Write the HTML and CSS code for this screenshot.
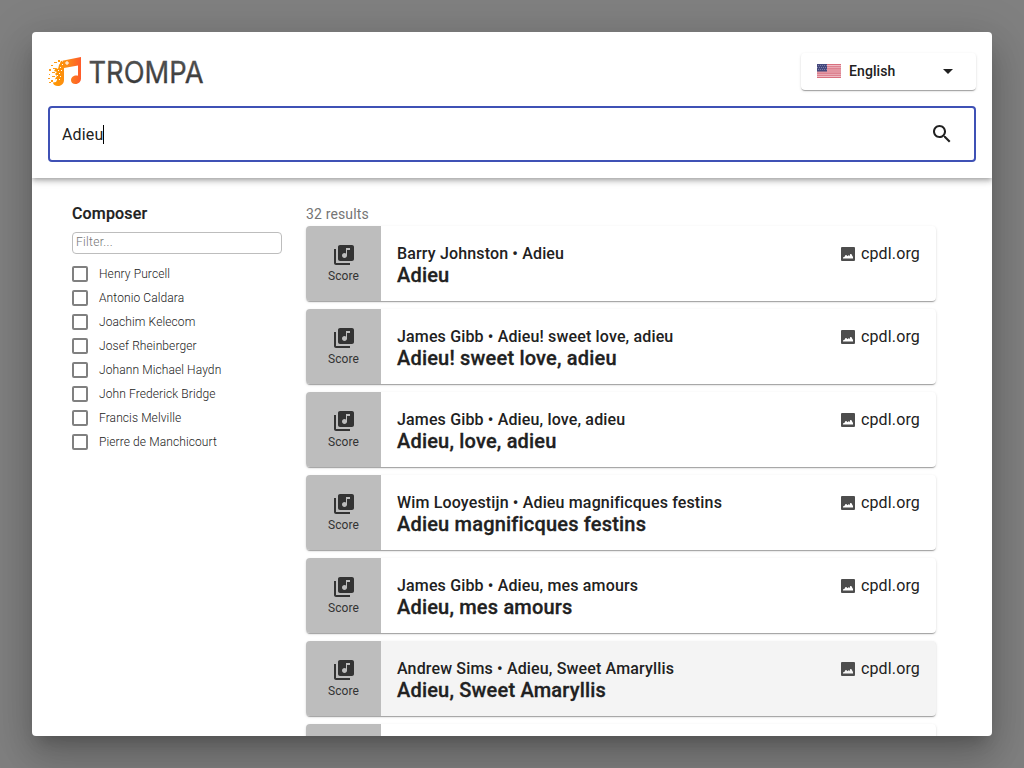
FILE: index.html
```html
<!DOCTYPE html>
<html lang="en">
<head>
<meta charset="utf-8">
<title>Trompa search</title>
<link rel="stylesheet" href="styles.css">
</head>
<body>
<svg width="0" height="0" class="defs">
  <symbol id="score" viewBox="0 0 24 24"><path d="M20 2H8c-1.100 0-2 .9-2 2v12c0 1.100.9 2 2 2h12c1.100 0 2-.9 2-2V4c0-1.100-.9-2-2-2zm-2 5h-3v5.500c0 1.380-1.120 2.500-2.500 2.500S10 13.880 10 12.500s1.120-2.500 2.500-2.500c.57 0 1.080.19 1.500.51V5h4v2zM4 6H2v14c0 1.100.9 2 2 2h14v-2H4V6z"/></symbol>
  <symbol id="picture" viewBox="0 0 14 14"><path fill-rule="evenodd" d="M1 0h12q1 0 1 1v12q0 1-1 1H1q-1 0-1-1V1q0-1 1-1zM2 11.500h10V10L10.300 7h-1L8.300 9.200 7.500 8 6.700 9.200 5.200 8h-.7L3.800 9.600 2 10.500z"/></symbol>
</svg>
<main class="dialog">
  <header class="header">
    <div class="topbar">
      <div class="brand">
        <svg class="note" width="34" height="30" viewBox="0 0 34 30">
          <defs><linearGradient id="flame"><stop offset="0" stop-color="#ff9800"/><stop offset=".5" stop-color="#fb8c17"/><stop offset="1" stop-color="#ff5a2b"/></linearGradient></defs>
          <path fill="url(#flame)" d="M13 5 33 1v21.500c0 3-2.400 5.500-5.500 5.500-2.800 0-4.500-1.600-4.500-3.800 0-2.700 2.500-4.700 5.300-4.700.6 0 1.200.1 1.700.3V9.500L16 12v12c0 3.500-2.500 6-6 6-3 0-5-1.400-5-3.500l3-.5 1-2-2-1 2-3-2-2 2-2-3-1 2-3 2 1 1-4z"/>
          <g fill="#ff9d1a"><path d="M3 9h2v1H3zM6 6h3v1H6zM1 13h2v2H1zM4 16h3v1H4zM1 18h1v1H1zM4 20h3v1H4zM0 22h2v1H0zM1 26h2v1H1zM3 24h2v2H3zM5 12h3v1H5zM10 4h2v2h-2z"/></g>
          <g fill="#fff"><path d="M11 7h1v1h-1zM14 8h1v1h-1zM12 11h1v1h-1zM9 11h1v1H9zM10 14h1v1h-1zM13 14h1v1h-1zM11 17h1v1h-1zM9 19h1v1H9zM12 20h1v1h-1zM8 23h1v1H8zM11 23h1v1h-1z"/></g>
          <path fill="none" stroke="#fff" stroke-width="1" d="M18 6h2v2h-2zM14 5h1"/>
        </svg>
        <svg class="wordmark" width="122" height="36" viewBox="0 0 122 36">
          <defs><linearGradient id="ink" x2="0" y2="1"><stop offset="0" stop-color="#575757"/><stop offset="1" stop-color="#333"/></linearGradient></defs>
          <text x="-.5" y="27" textLength="115" lengthAdjust="spacingAndGlyphs">TROMPA</text>
        </svg>
      </div>
      <div class="language">
        <svg width="24" height="14" viewBox="0 0 24 14"><path fill="#eebbc4" d="M0 0h24v14H0z"/><path stroke="#d8707f" stroke-width="1.080" d="M0 .54h24M0 2.690h24M0 4.850h24M0 7h24M0 9.150h24M0 11.310h24M0 13.460h24"/><path fill="#44487d" d="M0 0h10v7.500H0z"/><path stroke="#8c8eb2" stroke-width=".8" stroke-dasharray="1 1" d="M1 1.500h9M0 3.500h9M1 5.500h9"/></svg>
        <span>English</span>
        <svg class="caret" width="24" height="24" viewBox="0 0 24 24"><path d="m7 10 5 5 5-5z"/></svg>
      </div>
    </div>
    <div class="search">
      <span class="query">Adieu</span>
      <svg width="24" height="24" viewBox="0 0 24 24"><path d="M15.500 14h-.79l-.28-.27C15.410 12.590 16 11.110 16 9.500 16 5.910 13.090 3 9.500 3S3 5.910 3 9.500 5.910 16 9.500 16c1.610 0 3.090-.59 4.230-1.570l.27.28v.79l5 4.990L20.490 19l-4.990-5zm-6 0C7.010 14 5 11.990 5 9.500S7.010 5 9.500 5 14 7.010 14 9.500 11.990 14 9.500 14z"/></svg>
    </div>
  </header>
  <div class="content">
    <aside class="facets">
      <h2>Composer</h2>
      <input class="filter" placeholder="Filter...">
      <ul>
        <li><i class="box"></i>Henry Purcell</li>
        <li><i class="box"></i>Antonio Caldara</li>
        <li><i class="box"></i>Joachim Kelecom</li>
        <li><i class="box"></i>Josef Rheinberger</li>
        <li><i class="box"></i>Johann Michael Haydn</li>
        <li><i class="box"></i>John Frederick Bridge</li>
        <li><i class="box"></i>Francis Melville</li>
        <li><i class="box"></i>Pierre de Manchicourt</li>
      </ul>
    </aside>
    <section class="results">
      <p class="count">32 results</p>
      <article class="card"><div class="kind"><svg width="24" height="24"><use href="#score"/></svg>Score</div><div class="info"><p>Barry Johnston • Adieu</p><h3>Adieu</h3></div><div class="source"><svg width="14" height="14"><use href="#picture"/></svg>cpdl.org</div></article>
      <article class="card"><div class="kind"><svg width="24" height="24"><use href="#score"/></svg>Score</div><div class="info"><p>James Gibb • Adieu! sweet love, adieu</p><h3>Adieu! sweet love, adieu</h3></div><div class="source"><svg width="14" height="14"><use href="#picture"/></svg>cpdl.org</div></article>
      <article class="card"><div class="kind"><svg width="24" height="24"><use href="#score"/></svg>Score</div><div class="info"><p>James Gibb • Adieu, love, adieu</p><h3>Adieu, love, adieu</h3></div><div class="source"><svg width="14" height="14"><use href="#picture"/></svg>cpdl.org</div></article>
      <article class="card"><div class="kind"><svg width="24" height="24"><use href="#score"/></svg>Score</div><div class="info"><p>Wim Looyestijn • Adieu magnificques festins</p><h3>Adieu magnificques festins</h3></div><div class="source"><svg width="14" height="14"><use href="#picture"/></svg>cpdl.org</div></article>
      <article class="card"><div class="kind"><svg width="24" height="24"><use href="#score"/></svg>Score</div><div class="info"><p>James Gibb • Adieu, mes amours</p><h3>Adieu, mes amours</h3></div><div class="source"><svg width="14" height="14"><use href="#picture"/></svg>cpdl.org</div></article>
      <article class="card hovered"><div class="kind"><svg width="24" height="24"><use href="#score"/></svg>Score</div><div class="info"><p>Andrew Sims • Adieu, Sweet Amaryllis</p><h3>Adieu, Sweet Amaryllis</h3></div><div class="source"><svg width="14" height="14"><use href="#picture"/></svg>cpdl.org</div></article>
      <article class="card"><div class="kind"></div></article>
    </section>
  </div>
</main>
</body>
</html>
```
FILE: styles.css
```css
* { box-sizing: border-box; }
body {
  margin: 0;
  height: 100vh;
  padding: 32px;
  overflow: hidden;
  background: #808080;
  color: #212121;
  font-family: Roboto, sans-serif;
}
h2, h3, p, ul { margin: 0; padding: 0; }
svg { display: block; flex: none; fill: currentColor; }
.defs { display: none; }
.dialog {
  height: 704px;
  display: flex;
  flex-direction: column;
  overflow: hidden;
  border-radius: 4px;
  background: #fff;
  box-shadow: 0 11px 15px -7px rgba(0,0,0,.2), 0 24px 38px 3px rgba(0,0,0,.14), 0 9px 46px 8px rgba(0,0,0,.12);
}
.header {
  flex: none;
  height: 146px;
  padding: 21px 16px 0;
  box-shadow: 0 2px 4px -1px rgba(0,0,0,.2), 0 4px 5px rgba(0,0,0,.14), 0 1px 10px rgba(0,0,0,.12);
}
.topbar { display: flex; justify-content: space-between; height: 53px; }
.brand { display: flex; padding-top: 3px; }
.wordmark { margin-left: 7px; overflow: visible; }
.wordmark text { font: 400 30px Inter, sans-serif; fill: url(#ink); stroke: url(#ink); stroke-width: .3px; }
.language {
  display: flex;
  align-items: center;
  width: 175px;
  height: 37px;
  padding: 0 16px 1px;
  border-radius: 4px;
  font-size: 14px;
  font-weight: 500;
  line-height: 16px;
  letter-spacing: .1px;
  box-shadow: 0 2px 1px -1px rgba(0,0,0,.2), 0 1px 1px rgba(0,0,0,.14), 0 1px 3px rgba(0,0,0,.12);
}
.language span { margin-left: 8px; }
.caret { margin-left: auto; }
.search {
  display: flex;
  align-items: center;
  justify-content: space-between;
  height: 56px;
  padding: 0 20px 0 12px;
  border: 2px solid #3f51b5;
  border-radius: 4px;
}
.query { font-size: 16px; line-height: 19px; letter-spacing: .15px; border-right: 1px solid #000; }
.content { flex: 1; display: flex; min-height: 0; padding-left: 40px; }
.facets { width: 210px; flex: none; padding-top: 26px; }
.facets h2 { font-size: 16px; font-weight: 500; line-height: 20px; letter-spacing: .15px; -webkit-text-stroke: .2px; }
.filter {
  display: block;
  width: 210px;
  height: 22px;
  margin: 8px 0 7px;
  padding: 0 3px 2px;
  border: 1px solid #bdbdbd;
  border-radius: 4px;
  font: 300 12px Roboto, sans-serif;
  letter-spacing: .3px;
}
.filter::placeholder { color: #757575; }
.facets ul { list-style: none; }
.facets li { display: flex; align-items: center; height: 24px; padding-top: 1px; font-size: 12px; font-weight: 300; letter-spacing: .1px; }
.box { width: 16px; height: 16px; margin-right: 11px; border: 2px solid #808080; border-radius: 2px; }
.results { width: 630px; margin-left: 24px; padding-top: 26px; }
.count { height: 22px; font-size: 14px; line-height: 20px; letter-spacing: .15px; color: #757575; }
.card {
  display: flex;
  height: 75px;
  margin-bottom: 8px;
  overflow: hidden;
  border-radius: 4px;
  background: #fff;
  box-shadow: 0 2px 1px -1px rgba(0,0,0,.2), 0 1px 1px rgba(0,0,0,.14), 0 1px 3px rgba(0,0,0,.12);
}
.hovered { background: #f4f4f4; }
.kind {
  display: flex;
  flex: none;
  flex-direction: column;
  align-items: center;
  width: 75px;
  padding-top: 17px;
  background: #bdbdbd;
  color: #333;
  font-size: 12px;
  line-height: 18px;
  letter-spacing: .1px;
}
.info { flex: 1; padding: 17px 0 0 16px; }
.info p { font-size: 16px; font-weight: 500; line-height: 22px; letter-spacing: .15px; }
.info h3 { font-size: 20px; font-weight: 500; line-height: 20px; letter-spacing: .19px; -webkit-text-stroke: .3px; }
.source { display: flex; height: 22px; margin: 17px 16px 0 0; align-items: center; gap: 6px; line-height: 22px; letter-spacing: .15px; }
.source svg { color: #4d4d4d; }
```
